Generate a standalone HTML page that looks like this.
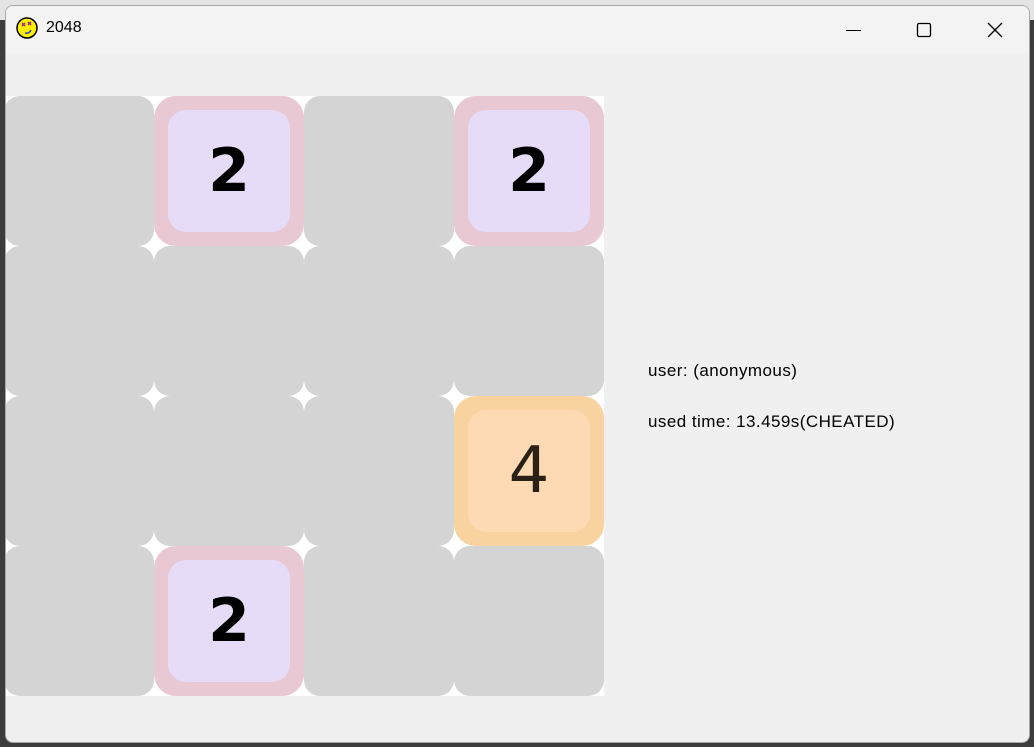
<!DOCTYPE html>
<html><head><meta charset="utf-8"><style>
*{margin:0;padding:0;box-sizing:border-box}
body{width:1034px;height:747px;overflow:hidden;background:#3c3c3c;position:relative;font-family:"Liberation Sans","DejaVu Sans",sans-serif}
.topbg{position:absolute;left:0;top:0;width:1034px;height:20px;background:#e4e4e4}
.win{position:absolute;left:5px;top:5px;width:1025px;height:738px;background:#f0f0f0;border:1px solid #a8a8a8;border-radius:8px;overflow:hidden}
.title{position:absolute;left:0;top:0;width:100%;height:47px;background:#f3f3f3}
.title .t{position:absolute;left:40px;top:13px;font-size:16px;color:#000}
.ic{position:absolute;left:9px;top:10px}
.board{position:absolute;left:-2px;top:90px;width:600px;height:600px;background:#fff}
.c{position:absolute;width:150px;height:150px;border-radius:16px;background:#d4d4d4}
.p{background:#e8c8d2;border-radius:22px}
.o{background:#f8d3a0;border-radius:22px}
.in{position:absolute;left:14px;top:14px;width:122px;height:122px;border-radius:18px;background:#e6dcf8;display:flex;align-items:center;justify-content:center;font-family:"DejaVu Sans",sans-serif;font-size:60px;font-weight:bold;color:#000}
.o .in{background:#fddab4;color:#2a2016;font-weight:normal;font-size:64px}
.info{position:absolute;left:642px;font-size:17px;letter-spacing:0.45px;color:#000}
</style></head><body>
<div class="topbg"></div>
<div class="win">
<div class="title">
<svg class="ic" width="24" height="24" viewBox="0 0 24 24"><circle cx="12" cy="12" r="10" fill="#ffee00" stroke="#000" stroke-width="1.5"/><path d="M7 7l3 3M10 7l-3 3M13 6l3 3M16 6l-3 3" stroke="#a0228a" stroke-width="1.5"/><path d="M10 17q4 1 6-3" stroke="#2244cc" stroke-width="1.5" fill="none"/></svg>
<div class="t">2048</div>
<svg style="position:absolute;left:840px;top:14px" width="170" height="20"><path d="M0 10.5h15" stroke="#000"/><rect x="71.5" y="3.5" width="13" height="13" rx="1.5" fill="none" stroke="#000" stroke-width="1.3"/><path d="M142 3l14 14M156 3l-14 14" stroke="#000" stroke-width="1.3"/></svg>
</div>
<div class="board">
<div class="c" style="left:0;top:0"></div>
<div class="c p" style="left:150px;top:0"><div class="in">2</div></div>
<div class="c" style="left:300px;top:0"></div>
<div class="c p" style="left:450px;top:0"><div class="in">2</div></div>
<div class="c" style="left:0;top:150px"></div>
<div class="c" style="left:150px;top:150px"></div>
<div class="c" style="left:300px;top:150px"></div>
<div class="c" style="left:450px;top:150px"></div>
<div class="c" style="left:0;top:300px"></div>
<div class="c" style="left:150px;top:300px"></div>
<div class="c" style="left:300px;top:300px"></div>
<div class="c o" style="left:450px;top:300px"><div class="in">4</div></div>
<div class="c" style="left:0;top:450px"></div>
<div class="c p" style="left:150px;top:450px"><div class="in">2</div></div>
<div class="c" style="left:300px;top:450px"></div>
<div class="c" style="left:450px;top:450px"></div>
</div>
<div class="info" style="top:355px">user: (anonymous)</div>
<div class="info" style="top:406px">used time: 13.459s(CHEATED)</div>
</div>
</body></html>
